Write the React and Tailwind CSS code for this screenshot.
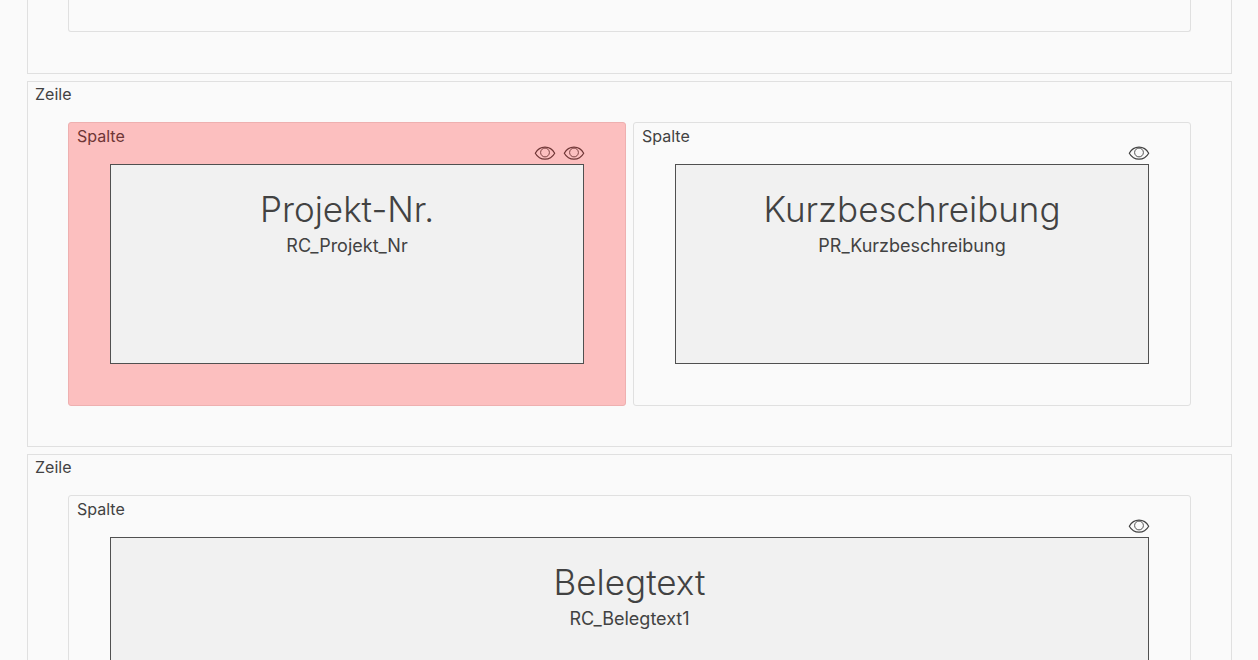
import React from "react";
import clsx from "clsx";

function EyeIcon() {
  return (
    <svg
      width="22"
      height="16"
      viewBox="0 0 22 16"
      fill="none"
      stroke="currentColor"
      strokeWidth="1.2"
      aria-hidden="true"
    >
      <path d="M1.300 8.200C3.600 4.200 7 2.200 11 2.200s7.400 2 9.700 6C18.400 12.200 15 14.200 11 14.200S3.600 12.200 1.300 8.200Z" strokeLinejoin="round" />
      <circle cx="11" cy="7.500" r="4.400" strokeWidth="0.900" />
    </svg>
  );
}

function FieldCard({ title, name }) {
  return (
    <div className="h-[200px] border border-[#505050] bg-[#f1f1f1] pt-5 text-center text-[#424242]">
      <h2 className="text-[35px] leading-12 font-light">{title}</h2>
      <p className="text-lg leading-[26px]">{name}</p>
    </div>
  );
}

function Column({ title, name, eyes = 1, selected = false }) {
  return (
    <section
      className={clsx(
        "min-w-0 flex-1 rounded-[3px] border",
        selected ? "border-[#eeb0b0] bg-[#fcbfbf] text-[#6f3636]" : "border-[#e0e0e0] text-[#424242]"
      )}
    >
      <header className="flex h-[41px] justify-between pr-10 pl-2">
        <span className="text-base leading-[26px]">Spalte</span>
        <div className="flex items-end gap-[7px] pb-[3px]">
          {Array.from({ length: eyes }, (_, i) => (
            <button key={i} type="button" aria-label="Sichtbarkeit">
              <EyeIcon />
            </button>
          ))}
        </div>
      </header>
      <div className="px-[41px] pb-[41px]">
        <FieldCard title={title} name={name} />
      </div>
    </section>
  );
}

function Row({ children }) {
  return (
    <section className="border border-[#e0e0e0] text-[#424242]">
      <header className="h-10 px-[7px] text-base leading-6">Zeile</header>
      <div className="flex gap-[7px] px-10 pb-10">{children}</div>
    </section>
  );
}

export default function App() {
  return (
    <main className="h-screen overflow-hidden bg-[#fafafa] pr-[26px] pl-[27px] font-['Inter',sans-serif]">
      <div className="flex flex-col gap-[7px]">
        <section className="border border-t-0 border-[#e0e0e0] px-10 pb-[41px]">
          <div className="h-8 rounded-b-[3px] border border-t-0 border-[#e0e0e0]" />
        </section>
        <Row>
          <Column title="Projekt-Nr." name="RC_Projekt_Nr" eyes={2} selected />
          <Column title="Kurzbeschreibung" name="PR_Kurzbeschreibung" />
        </Row>
        <Row>
          <Column title="Belegtext" name="RC_Belegtext1" />
        </Row>
      </div>
    </main>
  );
}
